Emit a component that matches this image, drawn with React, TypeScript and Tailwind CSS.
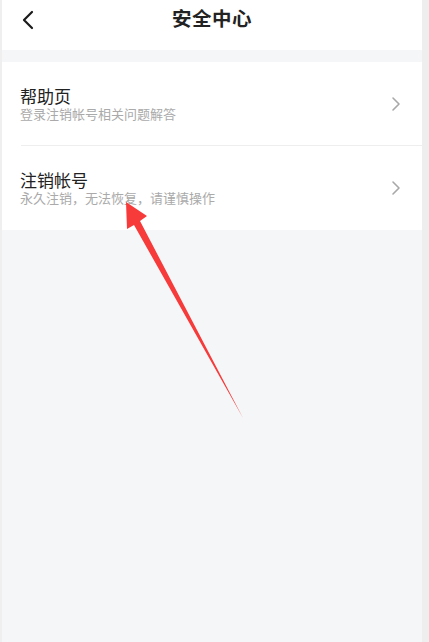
import React from "react";

const font = { fontFamily: '"Noto Sans CJK SC", "Noto Sans", sans-serif' };

function Chevron() {
  return (
    <svg width="10" height="16" viewBox="0 0 10 16" className="shrink-0">
      <path d="M2 2 L8 8 L2 14" fill="none" stroke="#a8a8a8" strokeWidth="1.6" strokeLinecap="round" strokeLinejoin="round" />
    </svg>
  );
}

function Row({ title, sub, divider }: { title: string; sub: string; divider?: boolean }) {
  return (
    <div className="relative h-[84px] flex items-center pl-[18px] pr-[21px]">
      <div className="flex-1 flex flex-col -mt-[2px]">
        <div className="text-[17px] leading-[21px] text-[#222]">{title}</div>
        <div className="text-[13px] leading-[16px] text-[#aaaaaa]">{sub}</div>
      </div>
      <Chevron />
      {divider && <div className="absolute left-[19px] right-0 bottom-0 h-px bg-[#eeeeee]" />}
    </div>
  );
}

export default function App() {
  return (
    <div className="relative w-[429px] h-[642px] flex overflow-hidden" style={font}>
      <div className="w-[2px] bg-[#efefef]" />
      <div className="flex-1 flex flex-col bg-[#f5f6f8]">
        <div className="h-[50px] bg-white relative flex items-start justify-center pt-[3px]">
          <svg width="14" height="20" viewBox="0 0 14 20" className="absolute left-[19px] top-[10px]">
            <path d="M11 2 L3 10 L11 18" fill="none" stroke="#1a1a1a" strokeWidth="2.2" strokeLinecap="round" strokeLinejoin="round" />
          </svg>
          <div className="text-[19.5px] leading-[30px] font-bold text-[#222] tracking-[0.5px]">安全中心</div>
        </div>
        <div className="h-[12px]" />
        <div className="bg-white flex flex-col">
          <Row title="帮助页" sub="登录注销帐号相关问题解答" divider />
          <Row title="注销帐号" sub="永久注销，无法恢复，请谨慎操作" />
        </div>
      </div>
      <div className="w-[7px] bg-[#eeeeee]" />
      <svg className="absolute left-0 top-0 pointer-events-none" width="429" height="642" viewBox="0 0 429 642">
        <polygon points="126,202 147,216 140,221 243,418 134,225 127,229" fill="#f73a3a" />
      </svg>
    </div>
  );
}
